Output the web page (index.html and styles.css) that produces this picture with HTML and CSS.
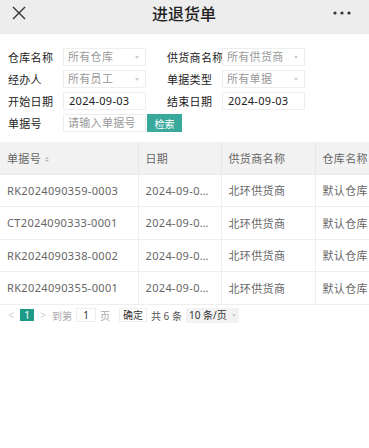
FILE: index.html
```html
<!DOCTYPE html>
<html lang="zh-CN">
<head>
  <meta charset="UTF-8" />
  <meta name="viewport" content="width=device-width, initial-scale=1.0"/>
  <title>进退货单</title>
  <link rel="stylesheet" href="styles.css">
</head>
<body>
  <div class="topbar">
    <span class="close">
      <svg width="16" height="16" viewBox="0 0 16 16"><path d="M2 2 L14 14 M14 2 L2 14" stroke="#333" stroke-width="1.4" fill="none"/></svg>
    </span>
    <h1>进退货单</h1>
    <span class="more">
      <svg width="18" height="4" viewBox="0 0 18 4"><circle cx="2" cy="2" r="1.6" fill="#333"/><circle cx="9" cy="2" r="1.6" fill="#333"/><circle cx="16" cy="2" r="1.6" fill="#333"/></svg>
    </span>
  </div>

  <div class="filters">
    <div class="field">
      <label>仓库名称</label>
      <div class="box select">所有仓库<i class="caret"></i></div>
    </div>
    <div class="field">
      <label>供货商名称</label>
      <div class="box select">所有供货商<i class="caret"></i></div>
    </div>
    <div class="field">
      <label>经办人</label>
      <div class="box select">所有员工<i class="caret"></i></div>
    </div>
    <div class="field">
      <label>单据类型</label>
      <div class="box select">所有单据<i class="caret"></i></div>
    </div>
    <div class="field">
      <label>开始日期</label>
      <div class="box date">2024-09-03</div>
    </div>
    <div class="field">
      <label>结束日期</label>
      <div class="box date">2024-09-03</div>
    </div>
    <div class="field wide">
      <label>单据号</label>
      <div class="box placeholder">请输入单据号</div>
      <button class="search">检索</button>
    </div>
  </div>

  <div class="table-wrap">
    <table class="grid">
      <colgroup>
        <col class="c1"><col class="c2"><col class="c3"><col class="c4">
      </colgroup>
      <thead>
        <tr>
          <th>单据号 <span class="sort"><i class="up"></i><i class="down"></i></span></th>
          <th>日期</th>
          <th>供货商名称</th>
          <th>仓库名称</th>
        </tr>
      </thead>
      <tbody>
        <tr><td>RK2024090359-0003</td><td>2024-09-03 10:21</td><td>北环供货商</td><td>默认仓库</td></tr>
        <tr><td>CT2024090333-0001</td><td>2024-09-03 09:12</td><td>北环供货商</td><td>默认仓库</td></tr>
        <tr><td>RK2024090338-0002</td><td>2024-09-03 09:05</td><td>北环供货商</td><td>默认仓库</td></tr>
        <tr><td>RK2024090355-0001</td><td>2024-09-03 08:40</td><td>北环供货商</td><td>默认仓库</td></tr>
      </tbody>
    </table>
  </div>

  <div class="pager">
    <span class="arrow">&lt;</span>
    <span class="page-num">1</span>
    <span class="arrow">&gt;</span>
    <span class="txt">到第</span>
    <span class="jump">1</span>
    <span class="txt">页</span>
    <span class="ok">确定</span>
    <span class="total">共 6 条</span>
    <span class="size">10 条/页 <i class="caret small"></i></span>
  </div>
</body>
</html>
```

FILE: styles.css
```css
* {
  box-sizing: border-box;
}

body {
  margin: 0;
  font-family: "Noto Sans", "Noto Sans CJK SC", sans-serif;
  color: #333;
  background: #fff;
  width: 369px;
  overflow: hidden;
}

.topbar {
  height: 34px;
  background: #ededed;
  display: flex;
  align-items: center;
  justify-content: space-between;
  padding: 0 10px 8px 10px;
}

.topbar h1 {
  margin: 0 0 0 6px;
  font-size: 16px;
  font-weight: 500;
  color: #222;
}

.close, .more {
  display: flex;
  align-items: center;
  width: 20px;
}

.close {
  margin-left: 1px;
}

.more {
  justify-content: flex-end;
  margin-right: 8px;
}

.filters {
  display: grid;
  grid-template-columns: 159px 159px;
  row-gap: 4px;
  padding: 14px 0 0 8px;
  letter-spacing: 0.3px;
}

.field {
  display: flex;
  align-items: center;
  height: 18px;
}

.field label {
  width: 55px;
  font-size: 11px;
  color: #222;
  white-space: nowrap;
}

.box {
  width: 83px;
  height: 18px;
  border: 1px solid #eee;
  font-size: 11px;
  line-height: 16px;
  padding: 0 4px;
  position: relative;
  white-space: nowrap;
}

.select, .placeholder {
  color: #999;
}

.date {
  color: #222;
  padding-left: 5px;
}

.caret {
  position: absolute;
  right: 6px;
  top: 7px;
  width: 0;
  height: 0;
  border-left: 2.5px solid transparent;
  border-right: 2.5px solid transparent;
  border-top: 3px solid #ccc;
}

.field.wide {
  grid-column: 1 / 3;
}

.search {
  margin-left: 1px;
  height: 18px;
  width: 35px;
  border: none;
  padding: 0;
  background: #39a99c;
  color: #fff;
  font-family: inherit;
  font-size: 10px;
}

.table-wrap {
  margin-top: 10px;
  overflow: hidden;
}

.grid {
  border-collapse: collapse;
  table-layout: fixed;
  width: 400px;
  font-size: 11px;
  letter-spacing: 0.35px;
  color: #666;
}

.c1 { width: 138px; }
.c2 { width: 83px; }
.c3 { width: 94px; }
.c4 { width: 85px; }

.grid th, .grid td {
  height: 32.5px;
  padding: 0 7px;
  text-align: left;
  font-weight: normal;
  white-space: nowrap;
  overflow: hidden;
  text-overflow: ellipsis;
  border: 1px solid #eee;
  border-top: none;
}

.grid th {
  background: #f2f2f2;
  border-color: #e8e8e8;
  height: 32px;
}

.grid tr > :first-child {
  border-left: none;
}

.sort {
  display: inline-flex;
  flex-direction: column;
  gap: 1px;
  vertical-align: middle;
  margin-left: 1px;
}

.sort i {
  width: 0;
  height: 0;
  border-left: 2px solid transparent;
  border-right: 2px solid transparent;
}

.sort .up {
  border-bottom: 2.5px solid #bbb;
}

.sort .down {
  border-top: 2.5px solid #bbb;
}

.pager {
  display: flex;
  align-items: center;
  gap: 4px;
  padding: 3px 0 0 6px;
  font-size: 10px;
  color: #bbb;
}

.arrow {
  width: 10px;
  text-align: center;
  color: #ccc;
}

.page-num {
  background: #1e9a89;
  color: #fff;
  width: 14px;
  height: 12px;
  line-height: 12px;
  text-align: center;
}

.txt {
  color: #aaa;
}

.jump {
  border: 1px solid #eee;
  width: 20px;
  height: 14px;
  line-height: 12px;
  text-align: center;
  color: #333;
}

.ok {
  border: 1px solid #eee;
  padding: 0 3px;
  height: 14px;
  line-height: 12px;
  color: #333;
  margin-left: 5px;
}

.total {
  color: #555;
}

.size {
  background: #f2f2f2;
  color: #333;
  height: 15px;
  line-height: 15px;
  padding: 0 12px 0 3px;
  position: relative;
}

.caret.small {
  right: 3px;
  top: 6px;
}
```
